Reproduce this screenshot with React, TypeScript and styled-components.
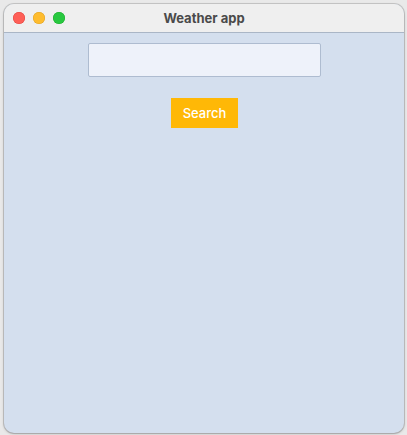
import React from "react";
import styled, { createGlobalStyle } from "styled-components";

const Global = createGlobalStyle`
  html, body { margin: 0; padding: 0; background: #e9e9e9; }
  body { font-family: Inter, "Open Sans", "Liberation Sans", sans-serif; }
  * { box-sizing: border-box; }
`;

const Stage = styled.div`
  width: 407px;
  height: 435px;
  padding: 4px 3px 2px 4px;
`;

const Window = styled.div`
  width: 400px;
  height: 429px;
  border-radius: 10px;
  overflow: hidden;
  display: flex;
  flex-direction: column;
  background: #d4dfee;
  box-shadow: 0 0 0 1px rgba(0, 0, 0, 0.14), 0 1px 3px rgba(0, 0, 0, 0.22);
`;

const TitleBar = styled.div`
  height: 29px;
  flex: none;
  background: #efefef;
  border-bottom: 1px solid #aab6c6;
  display: flex;
  align-items: center;
  position: relative;
  padding-left: 9px;
  gap: 8px;
`;

const Light = styled.span<{ $c: string; $b: string }>`
  width: 12px;
  height: 12px;
  border-radius: 50%;
  background: ${(p) => p.$c};
  box-shadow: inset 0 0 0 0.5px ${(p) => p.$b};
`;

const Title = styled.div`
  position: absolute;
  left: 0;
  right: 0;
  top: 0;
  bottom: 0;
  display: flex;
  align-items: center;
  justify-content: center;
  font-size: 13px;
  font-weight: 700;
  color: #4a4a4a;
  pointer-events: none;
`;

const Content = styled.div`
  flex: 1;
  display: flex;
  flex-direction: column;
  align-items: center;
  padding-top: 10px;
  padding-left: 1px;
`;

const Input = styled.input`
  width: 233px;
  height: 34px;
  border: 1px solid #aebcd0;
  border-radius: 2px;
  background: #eef2fa;
  outline: none;
  font-size: 13px;
  padding: 0 8px;
`;

const Button = styled.button`
  margin-top: 21px;
  width: 67px;
  height: 30px;
  border: none;
  background: #ffb806;
  color: #ffffff;
  font-family: Inter, "Open Sans", sans-serif;
  font-size: 13px;
  font-weight: 500;
  padding: 0;
`;

export default function App() {
  return (
    <Stage>
      <Global />
      <Window>
        <TitleBar>
          <Light $c="#fe5f57" $b="#e0443e" />
          <Light $c="#febc2e" $b="#dea123" />
          <Light $c="#28c840" $b="#1aab29" />
          <Title>Weather app</Title>
        </TitleBar>
        <Content>
          <Input type="text" />
          <Button>Search</Button>
        </Content>
      </Window>
    </Stage>
  );
}
